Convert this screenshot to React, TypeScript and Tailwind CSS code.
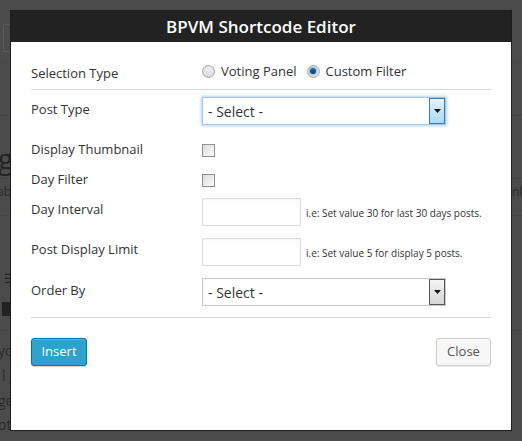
import React from "react";

const font = { fontFamily: '"Open Sans", "Noto Sans", Arial, sans-serif' };

function Radio({ checked }: { checked?: boolean }) {
  return (
    <span className="relative inline-flex h-[13px] w-[13px] items-center justify-center rounded-full border border-[#a9a9a9] bg-gradient-to-b from-[#f4f4f4] to-[#d8d8d8] shadow-[inset_0_1px_1px_rgba(0,0,0,0.1)]">
      {checked && (
        <span className="h-[6px] w-[6px] rounded-full bg-gradient-to-b from-[#1d6fa8] to-[#0b3f66] shadow-[0_0_1px_1px_rgba(80,160,220,0.6)]" />
      )}
    </span>
  );
}

function Checkbox() {
  return (
    <span className="inline-block h-[13px] w-[13px] border border-[#8f8f8f] bg-gradient-to-br from-[#dcdcdc] to-[#fbfbfb]" />
  );
}

function Select({ focused }: { focused?: boolean }) {
  return (
    <div
      className={
        "flex h-[28px] w-[244px] items-stretch border bg-white " +
        (focused
          ? "border-[#a6c8e6] shadow-[0_0_3px_1px_rgba(120,175,225,0.55)]"
          : "border-[#c8c8c8]")
      }
    >
      <span className="flex flex-1 items-center pl-[5px] text-[14px] text-[#333]">- Select -</span>
      <span
        className={
          "flex w-[16px] items-center justify-center border " +
          (focused
            ? "border-[#3d7bab] bg-gradient-to-b from-[#e6f3fc] to-[#a9d8f6]"
            : "border-[#555] bg-gradient-to-b from-[#f4f4f4] to-[#d6d6d6]")
        }
      >
        <svg width="7" height="4" viewBox="0 0 7 4">
          <path d="M0 0h7L3.5 4z" fill="#111" />
        </svg>
      </span>
    </div>
  );
}

function TextInput() {
  return <div className="h-[28px] w-[99px] border border-[#dcdcdc] bg-white shadow-[inset_0_1px_2px_rgba(0,0,0,0.05)]" />;
}

export default function App() {
  return (
    <div className="relative h-[441px] w-[522px] overflow-hidden bg-[#4b4b4b]" style={font}>
      {/* dimmed page behind the modal */}
      <div className="absolute left-[3px] top-[24px] h-[28px] w-[20px] rounded-[2px] border border-[#5a5a5a]" />
      <div className="absolute left-0 top-[62px] h-px w-full bg-[#474747]" />
      <div className="absolute left-0 top-[115px] h-px w-full bg-[#444]" />
      <div className="absolute left-0 top-[178px] h-px w-full bg-[#444]" />
      <div className="absolute left-0 top-[215px] h-px w-full bg-[#444]" />
      <div className="absolute left-0 top-[330px] h-px w-full bg-[#444]" />
      <div className="absolute left-[-2px] top-[144px] text-[28px] leading-none text-[#222]">g</div>
      <div className="absolute left-[-3px] top-[186px] text-[12px] leading-none text-[#2a2a2a]">ab</div>
      <div className="absolute left-[4px] top-[272px] text-[13px] leading-none text-[#222]">☰</div>
      <div className="absolute left-[2px] top-[302px] h-[14px] w-[9px] bg-[#222]" />
      <div className="absolute left-[-2px] top-[344px] text-[14px] leading-none text-[#2a2a2a]">yo</div>
      <div className="absolute left-[2px] top-[369px] text-[14px] leading-none text-[#2a2a2a]">l g</div>
      <div className="absolute left-[-2px] top-[394px] text-[14px] leading-none text-[#2a2a2a]">ge</div>
      <div className="absolute left-[-2px] top-[418px] text-[14px] leading-none text-[#2a2a2a]">ot</div>
      <div className="absolute left-[512px] top-[186px] text-[12px] leading-none text-[#2a2a2a]">nk</div>

      {/* modal */}
      <div className="absolute left-[10px] top-[10px] w-[502px] border border-[#1e1e1e] bg-white">
        <div className="flex h-[31px] items-center justify-center bg-[#222] text-[17px] font-semibold text-white">
          BPVM Shortcode Editor
        </div>
        <div className="px-[20px] pb-[64px] pt-[18px] text-[13px] text-[#333]">
          <div className="flex">
            <div className="mt-[4px] w-[171px] leading-[18px]">Selection Type</div>
            <div className="flex items-center gap-[6px] leading-[18px]">
              <Radio />
              <span>Voting Panel</span>
              <span className="ml-[4px] inline-flex">
                <Radio checked />
              </span>
              <span>Custom Filter</span>
            </div>
          </div>
          <div className="mt-[7px] h-px bg-[#d4d4d4]" />

          <div className="mt-[7px] flex items-center">
            <div className="w-[171px] pb-[2px]">Post Type</div>
            <Select focused />
          </div>

          <div className="mt-[16px] flex h-[18px] items-center">
            <div className="w-[171px]">Display Thumbnail</div>
            <Checkbox />
          </div>

          <div className="mt-[12px] flex h-[18px] items-center">
            <div className="w-[171px]">Day Filter</div>
            <Checkbox />
          </div>

          <div className="mt-[9px] flex items-center">
            <div className="w-[171px] pb-[4px]">Day Interval</div>
            <TextInput />
            <span className="ml-[5px] pt-[3px] text-[10px]">i.e: Set value 30 for last 30 days posts.</span>
          </div>

          <div className="mt-[12px] flex items-center">
            <div className="w-[171px] pb-[4px]">Post Display Limit</div>
            <TextInput />
            <span className="ml-[5px] pt-[3px] text-[10px]">i.e: Set value 5 for display 5 posts.</span>
          </div>

          <div className="mt-[12px] flex items-center">
            <div className="w-[171px] pb-[2px]">Order By</div>
            <Select />
          </div>

          <div className="mt-[11px] h-px bg-[#d4d4d4]" />

          <div className="mt-[20px] flex justify-between">
            <button className="h-[28px] w-[56px] rounded-[3px] border border-[#0074a2] bg-[#2ea2cc] text-[13px] text-white shadow-[inset_0_1px_0_rgba(120,200,230,0.5),0_1px_0_rgba(0,0,0,0.15)]">
              Insert
            </button>
            <button className="h-[28px] w-[55px] rounded-[3px] border border-[#ccc] bg-[#f7f7f7] text-[13px] text-[#555] shadow-[0_1px_0_rgba(0,0,0,0.08)]">
              Close
            </button>
          </div>
        </div>
      </div>
    </div>
  );
}
